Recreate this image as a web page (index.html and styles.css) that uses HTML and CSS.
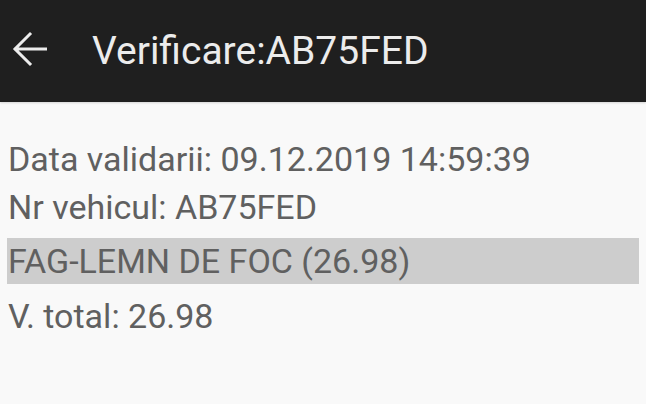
FILE: index.html
```html
<!DOCTYPE html>
<html lang="ro">
<head>
  <meta charset="UTF-8">
  <meta name="viewport" content="width=device-width, initial-scale=1.0">
  <title>Verificare</title>
  <link rel="stylesheet" href="styles.css">
</head>
<body>
  <header class="toolbar">
    <button class="back" aria-label="Inapoi">
      <svg width="46" height="46" viewBox="0 0 46 46">
        <path d="M8.5 23H38.5M23 8L8 23L23 38" fill="none" stroke="#ececec" stroke-width="3" stroke-linecap="square"/>
      </svg>
    </button>
    <h1 class="title">Verificare:AB75FED</h1>
  </header>

  <main class="details">
    <div class="row">Data validarii: 09.12.2019 14:59:39</div>
    <div class="row">Nr vehicul: AB75FED</div>
    <div class="row item">FAG-LEMN DE FOC (26.98)</div>
    <div class="row total">V. total: 26.98</div>
  </main>
</body>
</html>
```

FILE: styles.css
```css
body {
  margin: 0;
  background: #f9f9f9;
  font-family: Roboto, "Liberation Sans", sans-serif;
  color: #606060;
}
.toolbar {
  height: 102px;
  background: #1f1f1f;
  display: flex;
  align-items: center;
  padding-left: 7px;
  box-shadow: 0 1px 2px rgba(0,0,0,0.15);
}
.back {
  background: none;
  border: none;
  padding: 0;
  width: 46px;
  height: 46px;
  margin-top: -4px;
  display: flex;
}
.title {
  margin: 0 0 0 39px;
  font-size: 39px;
  font-weight: 400;
  line-height: 102px;
  color: #ececec;
}
.details {
  padding: 33px 7px 0;
}
.row {
  font-size: 34px;
  line-height: 48px;
  padding-left: 1px;
}
.item {
  background: #cdcdcd;
  line-height: 46px;
  margin: 7px 0 8px;
}
```
